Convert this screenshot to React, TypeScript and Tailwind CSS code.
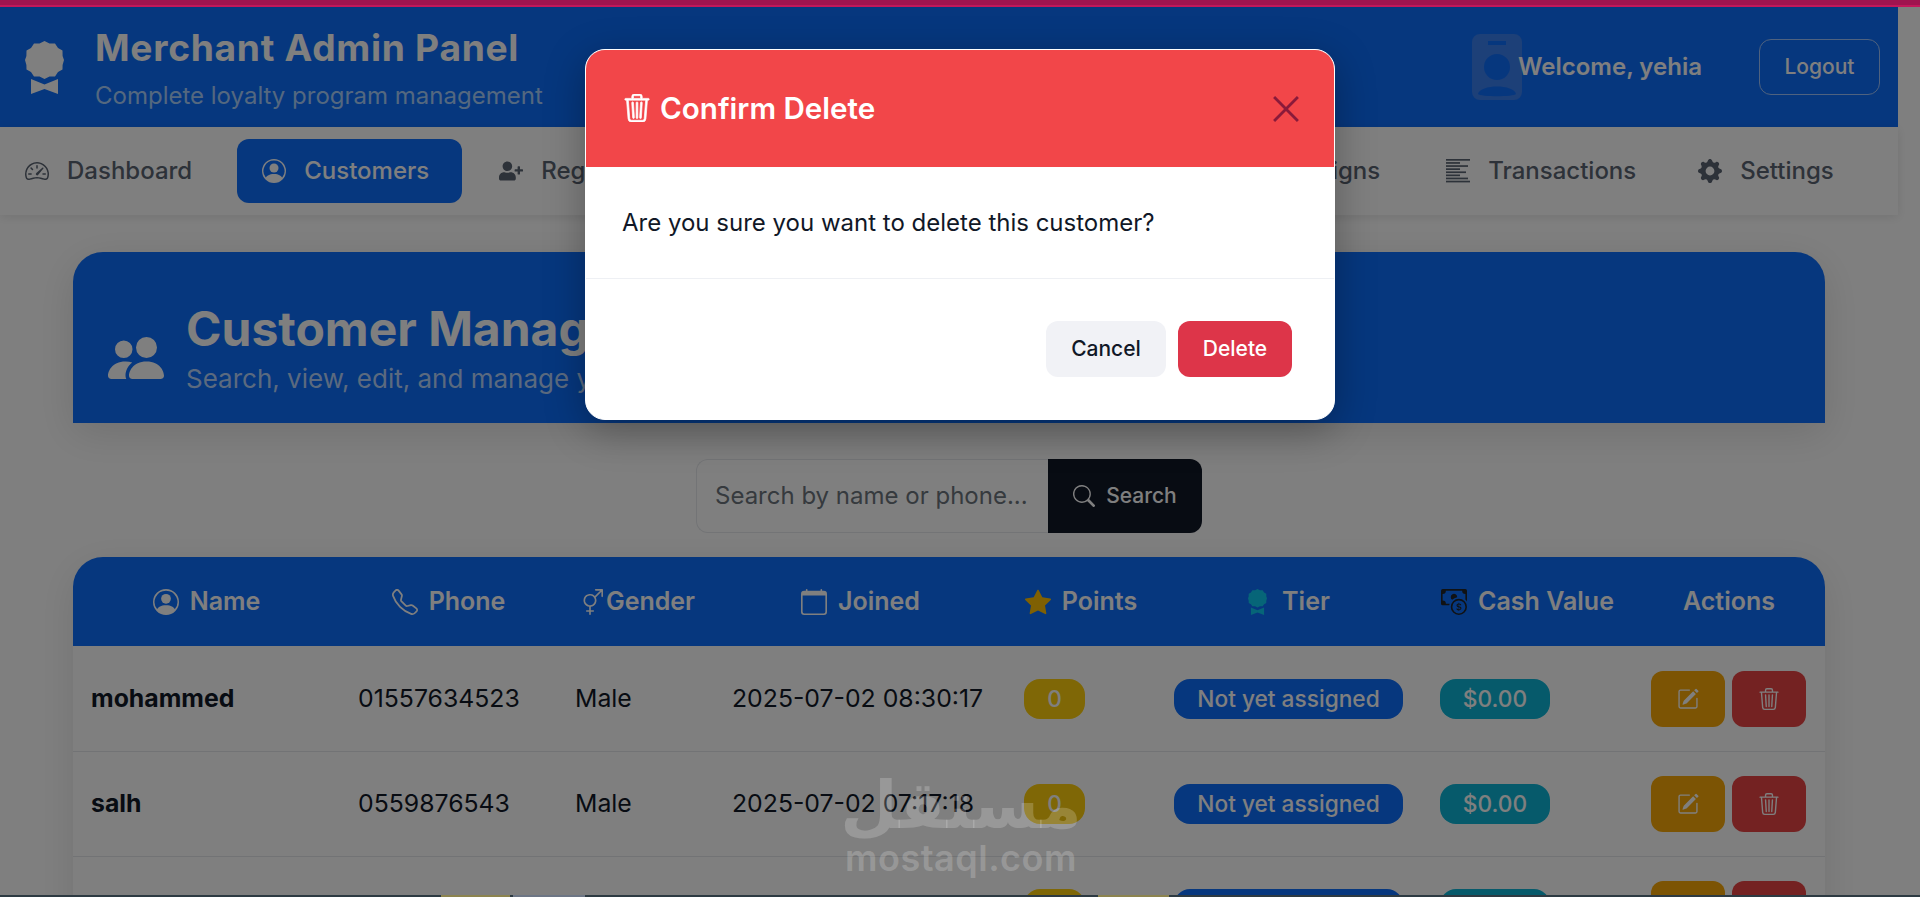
import React from "react";
import {
  BsSpeedometer2, BsPersonCircle, BsGearFill, BsPeopleFill, BsTrash3, BsTelephone,
  BsGenderAmbiguous, BsCalendar, BsStarFill, BsCashCoin, BsPencilSquare, BsSearch,
} from "react-icons/bs";
import { FaUserPlus, FaRegFlag } from "react-icons/fa";

const font = { fontFamily: '"Inter", "Noto Sans", sans-serif' };

function Rosette({ className }: { className?: string }) {
  return (
    <svg viewBox="0 0 39 53" className={className} fill="currentColor">
      <path d="M19.5 0L24.5 2.6L30 2.6L33 7L37.5 9.5L37.6 15L39 19L37.6 24L37.5 28.5L33 31L30 35.4L24.5 35.4L19.5 38L14.5 35.4L9 35.4L6 31L1.5 28.5L1.4 24L0 19L1.4 15L1.5 9.5L6 7L9 2.6L14.5 2.6Z" />
      <path d="M6 38L19.5 43.5L33 38V53L19.5 48L6 53Z" />
    </svg>
  );
}

function LinesIcon() {
  return (
    <svg viewBox="0 0 24 24" className="h-6 w-6" fill="currentColor">
      <rect x="0" y="0" width="24" height="1.7" />
      <rect x="0" y="3.1" width="14" height="1.7" />
      <rect x="0" y="6.2" width="22" height="1.7" />
      <rect x="0" y="9.3" width="14" height="1.7" />
      <rect x="0" y="12.4" width="20" height="1.7" />
      <rect x="0" y="15.5" width="14" height="1.7" />
      <rect x="0" y="18.6" width="22" height="1.7" />
      <rect x="0" y="21.7" width="24" height="1.7" />
    </svg>
  );
}

function Avatar() {
  return (
    <svg viewBox="0 0 50 66" className="h-[66px] w-[50px] shrink-0 text-[#3a80f0]" fill="currentColor">
      <path
        fillRule="evenodd"
        d="M8 0H42A8 8 0 0 1 50 8V58A8 8 0 0 1 42 66H8A8 8 0 0 1 0 58V8A8 8 0 0 1 8 0ZM16 7V11H34V7ZM25 20A13 13 0 1 0 25 46A13 13 0 1 0 25 20ZM6 60C8 50 42 50 44 60C42 63 8 63 6 60Z"
      />
    </svg>
  );
}

type NavProps = { icon: React.ReactNode; label: string; active?: boolean; cls?: string };
function NavItem({ icon, label, active, cls }: NavProps) {
  return (
    <a
      className={`flex h-16 shrink-0 items-center gap-[18px] rounded-xl pl-[25px] pr-[33px] text-[24px] leading-none font-medium ${
        active ? "bg-[#0d6efd] text-white" : "text-[#5b6472]"
      } ${cls ?? ""}`}
    >
      <span className="flex h-6 w-6 items-center justify-center text-[24px]">{icon}</span>
      {label}
    </a>
  );
}

function Th({ icon, label, gap }: { icon?: React.ReactNode; label: string; gap?: string }) {
  return (
    <th className="h-[89px] text-center align-middle text-[25px] font-semibold text-white">
      <span className={`inline-flex items-center align-middle ${gap ?? "gap-[11px]"}`}>
        {icon}
        {label}
      </span>
    </th>
  );
}

const rows = [
  { name: "mohammed", phone: "01557634523", joined: "2025-07-02 08:30:17" },
  { name: "salh", phone: "0559876543", joined: "2025-07-02 07:17:18" },
  { name: "ahmed", phone: "0551234567", joined: "2025-07-01 19:42:05" },
];

export default function App() {
  return (
    <div style={font} className="relative h-[897px] w-full overflow-hidden bg-white">
      <div className="w-[1898px]">
        <header className="mt-[7px] flex h-[120px] items-center bg-[#0d6efd] pl-[25px] pr-[18px] text-white">
          <Rosette className="h-[53px] w-[39px] shrink-0" />
          <div className="ml-[31px] flex flex-col pt-px">
            <h1 className="text-[37.2px] leading-[46px] font-bold tracking-[0.7px]">Merchant Admin Panel</h1>
            <p className="mt-[10px] text-[24px] leading-[30px] text-[#a8d0ff]">Complete loyalty program management</p>
          </div>
          <div className="ml-auto flex items-center">
            <Avatar />
            <span className="-ml-[4px] text-[24px] font-semibold">Welcome, yehia</span>
            <button className="ml-[57px] h-[56px] w-[121px] rounded-xl border border-[#9ec5fe] text-[21px] font-medium">Logout</button>
          </div>
        </header>

        <nav className="flex h-[88px] items-center bg-white shadow-[0_2px_10px_rgba(0,0,0,0.1)]">
          <NavItem icon={<BsSpeedometer2 />} label="Dashboard" cls="mr-3" />
          <NavItem icon={<BsPersonCircle />} label="Customers" active cls="mr-3" />
          <NavItem icon={<FaUserPlus />} label="Register" cls="mr-[515px]" />
          <NavItem icon={<FaRegFlag />} label="Campaigns" cls="mr-[8px]" />
          <NavItem icon={<LinesIcon />} label="Transactions" cls="mr-[4px]" />
          <NavItem icon={<BsGearFill />} label="Settings" />
        </nav>

        <main className="px-[73px] pt-[37px]">
          <section className="flex h-[171px] items-center rounded-t-[30px] bg-[#0d6efd] px-[35px] pt-[21px] text-white shadow-[0_10px_40px_rgba(0,0,0,0.12)]">
            <BsPeopleFill className="mt-[20px] h-[56px] w-[56px] shrink-0" />
            <div className="ml-[22px]">
              <h2 className="text-[48px] leading-[54px] font-bold">Customer Management</h2>
              <p className="mt-[8px] text-[26px] leading-[30px] text-[#b6d4fe]">Search, view, edit, and manage your customers</p>
            </div>
          </section>

          <div className="mt-[36px] flex h-[74px] justify-center">
            <div className="flex w-[352px] items-center rounded-l-xl border border-r-0 border-[#e6e8ec] bg-white pl-[18px] text-[24px] text-[#6c757d]">
              Search by name or phone...
            </div>
            <button className="flex w-[154px] items-center justify-center gap-[11px] rounded-r-xl bg-[#111827] text-[21px] font-medium text-white">
              <BsSearch className="h-[22px] w-[22px]" />
              Search
            </button>
          </div>

          <div className="mt-[24px] overflow-hidden rounded-t-[30px] bg-white shadow-[0_10px_40px_rgba(0,0,0,0.1)]">
            <table className="w-[1752px] table-fixed border-collapse text-left text-[24.8px] text-[#111827]">
              <colgroup>
                <col className="w-[267px]" />
                <col className="w-[217px]" />
                <col className="w-[158px]" />
                <col className="w-[291px]" />
                <col className="w-[150px]" />
                <col className="w-[266px]" />
                <col className="w-[211px]" />
                <col className="w-[192px]" />
              </colgroup>
              <thead className="bg-[#0d6efd]">
                <tr>
                  <Th icon={<BsPersonCircle className="h-[26px] w-[26px]" />} label="Name" />
                  <Th icon={<BsTelephone className="h-[26px] w-[26px]" />} label="Phone" />
                  <Th icon={<BsGenderAmbiguous className="h-[26px] w-[26px]" />} label="Gender" gap="gap-[3px]" />
                  <Th icon={<BsCalendar className="h-[26px] w-[26px]" />} label="Joined" />
                  <Th icon={<BsStarFill className="h-[26px] w-[26px] text-[#ffc107]" />} label="Points" />
                  <Th icon={<Rosette className="h-[26px] w-[19px] text-[#0dcaf0]" />} label="Tier" gap="gap-[15px]" />
                  <Th icon={<BsCashCoin className="h-[26px] w-[26px] text-[#212529]" />} label="Cash Value" />
                  <Th label="Actions" />
                </tr>
              </thead>
              <tbody>
                {rows.map((r) => (
                  <tr key={r.name} className="h-[105px] border-b border-[#e5e7eb]">
                    <td className="pl-[18px] font-bold">{r.name}</td>
                    <td className="pl-[18px]">{r.phone}</td>
                    <td className="pl-[18px]">Male</td>
                    <td className="pl-[17px]">{r.joined}</td>
                    <td className="pl-[18px] pt-[1px]">
                      <span className="inline-flex h-10 w-[61px] items-center justify-center rounded-[16px] bg-[#ffce0c] align-middle text-[22.7px] font-medium text-white">0</span>
                    </td>
                    <td className="pl-[18px] pt-[1px]">
                      <span className="inline-flex h-10 w-[229px] items-center justify-center rounded-[16px] bg-[#0d6efd] align-middle text-[22.7px] font-medium text-white">Not yet assigned</span>
                    </td>
                    <td className="pl-[18px] pt-[1px]">
                      <span className="inline-flex h-10 w-[110px] items-center justify-center rounded-[16px] bg-[#0cb5d6] align-middle text-[22.7px] font-medium text-white">$0.00</span>
                    </td>
                    <td className="pl-[18px] pt-[1px]">
                      <div className="flex gap-[7px]">
                        <button className="flex h-14 w-[74px] items-center justify-center rounded-xl bg-[#f8a908] text-white">
                          <BsPencilSquare className="h-[22px] w-[22px]" />
                        </button>
                        <button className="flex h-14 w-[74px] items-center justify-center rounded-xl bg-[#e84545] text-white">
                          <BsTrash3 className="h-[22px] w-[22px]" />
                        </button>
                      </div>
                    </td>
                  </tr>
                ))}
              </tbody>
            </table>
          </div>
        </main>
      </div>

      {/* backdrop */}
      <div className="absolute inset-0 bg-black/50" />

      {/* top stripe */}
      <div className="absolute inset-x-0 top-0 h-[7px] border-b-2 border-[#c2185b] bg-[#a0144f]" />

      {/* watermark */}
      <div className="pointer-events-none absolute left-[843px] top-[766px] flex w-[236px] flex-col items-center text-white/20">
        <span dir="rtl" lang="ar" className="text-[66px] leading-[80px] font-bold" style={{ fontFamily: '"DejaVu Sans", sans-serif' }}>مستقل</span>
        <span className="-mt-[8px] text-[36px] leading-[40px] font-semibold tracking-[0.5px]">mostaql.com</span>
      </div>

      {/* bottom edge */}
      <div className="absolute inset-x-0 bottom-0 flex h-[2px] bg-[#2d3a42]">
        <span className="ml-[441px] w-[69px] bg-[#8c8450]" />
        <span className="ml-[3px] w-[72px] bg-[#6d7685]" />
        <span className="ml-[513px] w-[71px] bg-[#8c8450]" />
      </div>

      {/* modal */}
      <div className="absolute left-1/2 top-[49px] flex h-[371px] w-[750px] -translate-x-1/2 flex-col overflow-hidden rounded-[20px] border border-white bg-white shadow-[0_10px_40px_rgba(0,0,0,0.3)]">
        <div className="flex h-[117px] shrink-0 items-center justify-between bg-[#f24649] pl-[37px] pr-[35px] text-white">
          <h3 className="flex items-center gap-[9px] text-[29.6px] font-semibold">
            <BsTrash3 className="h-[28px] w-[28px] stroke-[0.4px]" />
            Confirm Delete
          </h3>
          <svg viewBox="0 0 24 24" className="h-[26px] w-[26px] text-[#8a1a3a]" fill="none" stroke="currentColor" strokeWidth="2.6">
            <path d="M1 1L23 23M23 1L1 23" />
          </svg>
        </div>
        <div className="flex h-[112px] shrink-0 items-start border-b border-[#eef0f4] pl-[36px] pt-[41px] text-[24px] leading-[30px] text-[#111827]">
          Are you sure you want to delete this customer?
        </div>
        <div className="flex flex-1 justify-end gap-[12px] pr-[42px] pt-[42px]">
          <button className="h-14 w-[120px] rounded-xl bg-[#f1f2f6] text-[21px] font-medium text-[#111827]">Cancel</button>
          <button className="h-14 w-[114px] rounded-xl bg-[#dd3549] text-[21px] font-medium text-white">Delete</button>
        </div>
      </div>
    </div>
  );
}
